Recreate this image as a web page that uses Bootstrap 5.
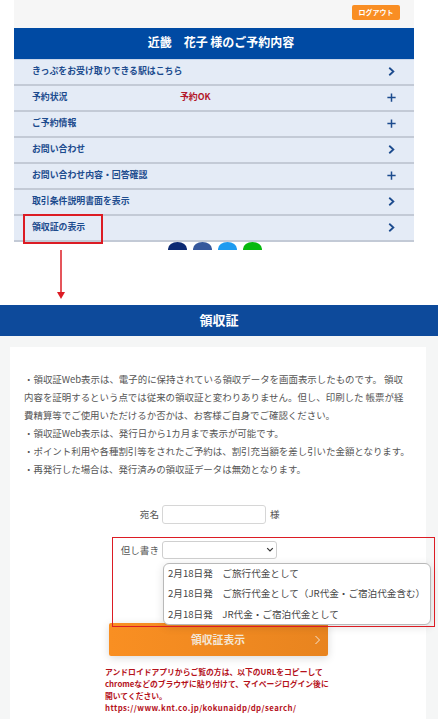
<!DOCTYPE html>
<html lang="ja">
<head>
  <meta charset="UTF-8" />
  <meta name="viewport" content="width=device-width, initial-scale=1" />
  <title>領収証の表示</title>
  <link href="https://cdn.jsdelivr.net/npm/bootstrap@5.3.0/dist/css/bootstrap.min.css" rel="stylesheet" />
  <style>
    html, body { height: 719px; overflow: hidden; }
    body { font-family: "Noto Sans CJK JP", "Liberation Sans", sans-serif; background: #fff; position: relative; color: #444; }
    .top-wrap { width: 400px; margin-left: 14px; }
    .top-bar { height: 28px; background: #f6f6f6; padding: 5px 14px 0 0; }
    .logout-btn { width: 48px; height: 15px; background: #f98e24; color: #fff; font-size: 7px; font-weight: 700; line-height: 15px; border-radius: 2px; text-align: center; }
    .head-blue { height: 32px; background: #004aa3; border-bottom: 1px solid #c9d6ea; color: #fff; font-size: 12px; font-weight: 700; line-height: 28px; text-align: center; padding-left: 14px; }
    .menu-row { height: 26px; background: #e4ebf6; border-bottom: 2px solid #c3cad6; padding: 0 18px 2px 18px; color: #1c4b8e; font-size: 8.9px; font-weight: 700; }
    .menu-status { position: absolute; left: 180px; color: #b3172a; }
    .row-icon { width: 9px; height: 9px; color: #1c4b8e; }
    .sns-dots { height: 8px; gap: 6px; overflow: hidden; padding-left: 2px; }
    .sns-dot { width: 19px; height: 14px; border-radius: 50%; }
    .gap-zone { height: 55px; }
    .receipt-title { width: 438px; height: 31px; background: #0d4a9b; color: #fff; font-size: 13px; font-weight: 700; line-height: 30px; text-align: center; }
    .receipt-bg { width: 438px; height: 383px; background: #f5f6f6; padding: 11px 12px 0 10px; }
    .receipt-card { height: 372px; background: #fff; padding: 23px 8px 0 14px; }
    .notes { font-size: 9.45px; line-height: 18px; color: #555; white-space: nowrap; }
    .form-zone { margin-top: 27px; font-size: 9.6px; color: #555; }
    .form-label-cell { width: 138px; text-align: right; padding-right: 3px; }
    .text-box { width: 104px; height: 19px; border: 1px solid #d6d6d6; border-radius: 3px; background: #fff; }
    .sel-box { width: 115px; height: 18px; border: 1px solid #cfcfcf; border-radius: 3px; background: #fff; padding-right: 2px; }
    .name-row { margin-bottom: 17px; }
    .sel-row { height: 82px; }
    .sel-row .form-label-cell { line-height: 19px; }
    .show-btn { width: 219px; height: 33px; margin-left: 85px; background: linear-gradient(90deg, #f98f22, #e8841f); color: #f3e6d6; font-size: 10.8px; font-weight: 700; border-radius: 2px; padding: 0 7px 0 0; box-shadow: 0 2px 8px rgba(0,0,0,.15); }
    .show-btn span:first-child { margin-left: 82px; }
    .red-note { margin: 10px 0 0 81px; color: #b5121b; font-size: 7.8px; font-weight: 700; line-height: 12px; white-space: nowrap; }
    .red-url { letter-spacing: .43px; }
    .pick-list { position: absolute; left: 163px; top: 563px; width: 268px; height: 62px; background: #fff; border: 1px solid #b9b9b9; border-radius: 6px; font-size: 9.6px; color: #444; padding: 0 0 0 4px; line-height: 20.4px; white-space: nowrap; box-shadow: 0 2px 10px rgba(0,0,0,.12); z-index: 2; }
    .pick-list div:first-child { margin-top: -1px; }
    .mark-box { position: absolute; border: 2px solid #dc1c24; z-index: 3; }
    .mark-a { left: 23px; top: 214px; width: 80px; height: 30px; }
    .mark-b { left: 112px; top: 537px; width: 323px; height: 90px; border-width: 1.5px; }
    .arrow-svg { position: absolute; left: 55px; top: 250px; z-index: 3; }
  </style>
</head>
<body>

<div class="top-wrap">
  <div class="top-bar d-flex justify-content-end">
    <div class="logout-btn">ログアウト</div>
  </div>
  <div class="head-blue">近畿　花子 様のご予約内容</div>
  <div class="menu-row d-flex justify-content-between align-items-center"><span>きっぷをお受け取りできる駅はこちら</span><svg class="row-icon" viewBox="0 0 12 12"><path d="M3 1 8.5 6 3 11" fill="none" stroke="currentColor" stroke-width="2.4"/></svg></div>
  <div class="menu-row d-flex justify-content-between align-items-center"><span>予約状況</span><span class="menu-status">予約OK</span><svg class="row-icon" viewBox="0 0 12 12"><path d="M6 .5v11M.5 6h11" fill="none" stroke="currentColor" stroke-width="2"/></svg></div>
  <div class="menu-row d-flex justify-content-between align-items-center"><span>ご予約情報</span><svg class="row-icon" viewBox="0 0 12 12"><path d="M6 .5v11M.5 6h11" fill="none" stroke="currentColor" stroke-width="2"/></svg></div>
  <div class="menu-row d-flex justify-content-between align-items-center"><span>お問い合わせ</span><svg class="row-icon" viewBox="0 0 12 12"><path d="M3 1 8.5 6 3 11" fill="none" stroke="currentColor" stroke-width="2.4"/></svg></div>
  <div class="menu-row d-flex justify-content-between align-items-center"><span>お問い合わせ内容・回答確認</span><svg class="row-icon" viewBox="0 0 12 12"><path d="M6 .5v11M.5 6h11" fill="none" stroke="currentColor" stroke-width="2"/></svg></div>
  <div class="menu-row d-flex justify-content-between align-items-center"><span>取引条件説明書面を表示</span><svg class="row-icon" viewBox="0 0 12 12"><path d="M3 1 8.5 6 3 11" fill="none" stroke="currentColor" stroke-width="2.4"/></svg></div>
  <div class="menu-row d-flex justify-content-between align-items-center"><span>領収証の表示</span><svg class="row-icon" viewBox="0 0 12 12"><path d="M3 1 8.5 6 3 11" fill="none" stroke="currentColor" stroke-width="2.4"/></svg></div>
  <div class="sns-dots d-flex justify-content-center">
    <div class="sns-dot" style="background:#0c2a73"></div>
    <div class="sns-dot" style="background:#35589c"></div>
    <div class="sns-dot" style="background:#1d9bf0"></div>
    <div class="sns-dot" style="background:#06b90e"></div>
  </div>
</div>

<div class="gap-zone"></div>

<div class="receipt-title">領収証</div>
<div class="receipt-bg">
  <div class="receipt-card">
    <div class="notes">
      ・領収証Web表示は、電子的に保持されている領収データを画面表示したものです。 領収<br>
      内容を証明するという点では従来の領収証と変わりありません。但し、印刷した 帳票が経<br>
      費精算等でご使用いただけるか否かは、お客様ご自身でご確認ください。<br>
      ・領収証Web表示は、発行日から1カ月まで表示が可能です。<br>
      ・ポイント利用や各種割引等をされたご予約は、割引充当額を差し引いた金額となります。<br>
      ・再発行した場合は、発行済みの領収証データは無効となります。
    </div>
    <div class="form-zone">
      <div class="name-row d-flex align-items-center">
        <div class="form-label-cell">宛名</div>
        <div class="text-box"></div>
        <div class="ms-1">様</div>
      </div>
      <div class="sel-row d-flex align-items-start">
        <div class="form-label-cell">但し書き</div>
        <div class="sel-box d-flex justify-content-end align-items-center">
          <svg width="8" height="6" viewBox="0 0 8 6"><path d="M1.2 1.2 4 4 6.8 1.2" fill="none" stroke="#333" stroke-width="1.2"/></svg>
        </div>
      </div>
    </div>
    <div class="show-btn d-flex justify-content-between align-items-center">
      <span>領収証表示</span>
      <svg width="7" height="10" viewBox="0 0 7 10"><path d="M1.5 1 5.5 5l-4 4" fill="none" stroke="#f3e6d6" stroke-width="1"/></svg>
    </div>
    <div class="red-note">アンドロイドアプリからご覧の方は、以下のURLをコピーして<br>chromeなどのブラウザに貼り付けて、マイページログイン後に<br>開いてください。<br><span class="red-url">https://www.knt.co.jp/kokunaidp/dp/search/</span></div>
  </div>
</div>

<div class="pick-list">
  <div>2月18日発　ご旅行代金として</div>
  <div>2月18日発　ご旅行代金として（JR代金・ご宿泊代金含む）</div>
  <div>2月18日発　JR代金・ご宿泊代金として</div>
</div>

<div class="mark-box mark-a"></div>
<div class="mark-box mark-b"></div>
<svg class="arrow-svg" width="12" height="50" viewBox="0 0 12 50"><path d="M6 0v44" stroke="#dc1c24" stroke-width="1.5"/><path d="M2 42h8l-4 7z" fill="#dc1c24"/></svg>

<script src="https://cdn.jsdelivr.net/npm/bootstrap@5.3.0/dist/js/bootstrap.bundle.min.js"></script>
</body>
</html>
